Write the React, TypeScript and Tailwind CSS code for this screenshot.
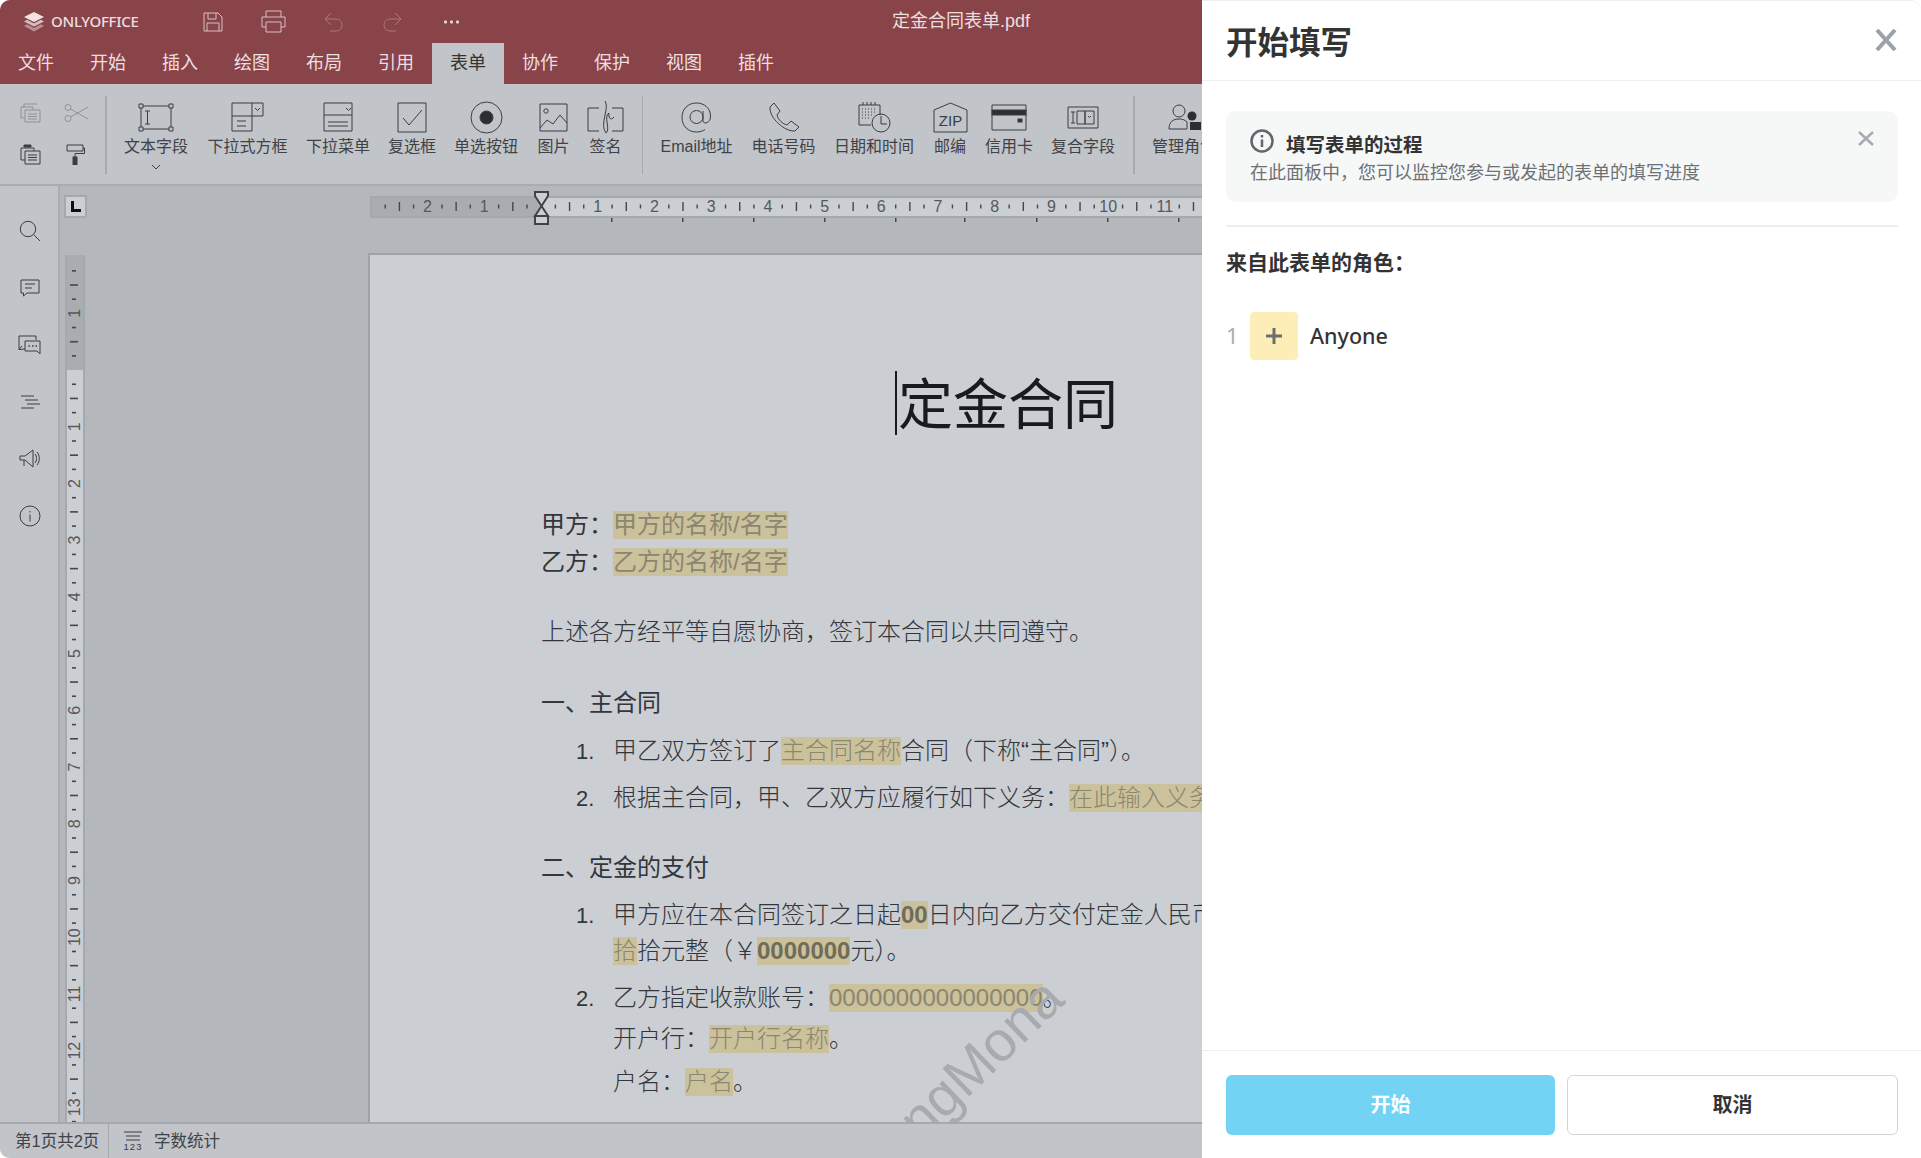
import { ReactNode } from "react";

const ICON = "#3a3d42";
const TICKS_H = Array.from({ length: 76 }, (_, i) => i - 12);
const TICKS_V = Array.from({ length: 64 }, (_, i) => i - 8);

function TopRuler() {
  const origin = 171;
  const step = 14.18;
  return (
    <svg width="832" height="22" className="shrink-0 overflow-visible ml-[283px]">
      <rect x="0" y="0" width="832" height="22" fill="#a5a8ad" />
      <rect x="170" y="2" width="662" height="18" fill="#cbced3" />
      <rect x="2" y="2" width="168" height="18" fill="#a9acb1" />
      {TICKS_H.map((i) => {
        const x = origin + i * step;
        if (x < 4 || i === 0) return null;
        const m = ((i % 4) + 4) % 4;
        if (m === 0) {
          return (
            <text key={i} x={x} y="15.5" fontSize="16" textAnchor="middle" fill="#55585c" fontFamily="Liberation Sans, sans-serif">
              {Math.abs(i / 4)}
            </text>
          );
        }
        const h = m === 2 ? 9 : 4;
        return <rect key={i} x={x - 0.5} y={10.5 - h / 2} width="1.4" height={h} fill="#44474b" />;
      })}
      {[241, 312, 383, 454, 525, 594, 666, 737, 808].map((x) => (
        <rect key={x} x={x} y="22" width="1.5" height="4" fill="#44474b" />
      ))}
      <path d="M165 -4H178V0L171.5 10L165 0ZM171.5 10L178 20H165ZM165 20H178V28H165Z" fill="#cbced3" stroke="#3f4246" strokeWidth="2" />
    </svg>
  );
}

function SideRuler() {
  const origin = 115;
  const step = 14.18;
  return (
    <svg width="20" height="867" className="shrink-0 ml-[5px]">
      <rect width="20" height="867" fill="#a5a8ad" />
      <rect x="2" y="0" width="16" height="867" fill="#cbced3" />
      <rect x="2" y="0" width="16" height="115" fill="#a9acb1" />
      {TICKS_V.map((i) => {
        const y = origin + i * step;
        if (y < 6 || i === 0) return null;
        const m = ((i % 4) + 4) % 4;
        if (m === 0) {
          return (
            <text key={i} x="0" y="0" fontSize="16" textAnchor="middle" fill="#55585c" fontFamily="Liberation Sans, sans-serif" transform={`translate(15 ${y}) rotate(-90)`}>
              {Math.abs(i / 4)}
            </text>
          );
        }
        const w = m === 2 ? 8 : 4;
        return <rect key={i} x={9 - w / 2} y={y - 0.7} width={w} height="1.6" fill="#44474b" />;
      })}
    </svg>
  );
}

function Hl({ children, bold }: { children: ReactNode; bold?: boolean }) {
  return (
    <span className={"inline-block h-[28px] leading-[27px] bg-[#cbc19b] " + (bold ? "font-bold text-[#6f6c5a] " : "text-[#8a8670] ")}>
      {children}
    </span>
  );
}

function Line({ className, children }: { className?: string; children: ReactNode }) {
  return <div className={"flex items-center h-[34px] whitespace-nowrap text-[24px] font-light text-[#33363a] " + (className ?? "")}>{children}</div>;
}

function Num({ n }: { n: string }) {
  return <span className="w-[37px] ml-[35px] shrink-0 font-normal text-[22px] text-[#33363a] font-['Liberation_Sans']">{n}</span>;
}

function Tool({ label, className, children, arrow }: { label: string; className: string; children: ReactNode; arrow?: boolean }) {
  return (
    <div className={"shrink-0 flex flex-col items-center " + className}>
      <div className="h-[52px] w-full flex items-center justify-center pt-[14px]">{children}</div>
      <div className="h-[20px] leading-[20px] mt-[1px] text-[16px] text-[#3f4246] whitespace-nowrap">{label}</div>
      {arrow && (
        <svg width="10" height="6" className="mt-[7px]" fill="none" stroke={ICON}>
          <path d="M1 1L5 5L9 1" />
        </svg>
      )}
    </div>
  );
}

function Sep({ className }: { className: string }) {
  return <div className={"shrink-0 w-[1.5px] h-[78px] mt-[12px] bg-[#a6a9ae] " + className} />;
}

const SIDE_ICONS = [
  <svg key="a" width="22" height="22" fill="none" stroke={ICON}>
    <circle cx="9" cy="9" r="7.7" />
    <path d="M14.5 14.5L21 21" />
  </svg>,
  <svg key="b" width="20" height="18" fill="none" stroke={ICON}>
    <path d="M1 1H19V14H7L3.5 17V14H1Z" />
    <path d="M5 5H15M5 9H12" />
  </svg>,
  <svg key="c" width="23" height="20" fill="none" stroke={ICON}>
    <path d="M7 14L1 14.5V1H18V5" />
    <path d="M1 14.5L4 11" />
    <path d="M7 6H22V19L19 16H7Z" />
    <path d="M10.5 11H12M14 11H15.5M17.5 11H19" strokeWidth="1.5" />
  </svg>,
  <svg key="d" width="20" height="14" fill="none" stroke={ICON}>
    <path d="M1 1H14M5 5H18M7 9H20M1 13H14" />
  </svg>,
  <svg key="e" width="22" height="19" fill="none" stroke={ICON}>
    <path d="M1 7H6L14 1V18L6 11H1Z" />
    <path d="M5 11V17" />
    <path d="M16 5C18 7 18 12 16 14M18 3C21 6 21 13 18 16" />
  </svg>,
  <svg key="f" width="22" height="22" fill="none" stroke={ICON}>
    <circle cx="11" cy="11" r="10" />
    <path d="M11 9.5V16.5M11 6V7.5" />
  </svg>,
];

export default function App() {
  return (
    <div className="w-[1921px] h-[1158px] flex overflow-hidden bg-white text-[#333] font-['Liberation_Sans','Noto_Sans_CJK_SC',sans-serif]">
      <div className="w-[1202px] shrink-0 flex flex-col overflow-hidden rounded-tl-[10px] rounded-bl-[10px] bg-[#c1c4c9]">
        <div className="h-[84px] shrink-0 bg-[#884449] text-[#ecdfe0]">
          <div className="h-[43px] flex items-center">
            <svg width="20" height="20" className="ml-[24px] shrink-0">
              <path d="M10 0L20 5L10 10L0 5Z" fill="#efe3e4" />
              <path d="M3 7.8L10 11.5L17 7.8L20 9.5L10 14.5L0 9.5Z" fill="#d6bec0" />
              <path d="M3 12.3L10 16L17 12.3L20 14L10 19.5L0 14Z" fill="#b98f92" />
            </svg>
            <span className="ml-[7px] w-[90px] whitespace-nowrap text-[15px] font-medium font-['Noto_Sans'] tracking-[-0.25px]">ONLYOFFICE</span>
            <svg width="20" height="20" className="ml-[62px] shrink-0" fill="none" stroke="#d9bfc1">
              <path d="M1 1H15L19 5V19H1Z" />
              <path d="M5 1V7H13V1M4 19V11H16V19" />
            </svg>
            <svg width="25" height="23" className="ml-[38px] shrink-0" fill="none" stroke="#d9bfc1">
              <path d="M5 7V1H20V7M5 17H1V7H24V17H20" />
              <path d="M5 12H20V22H5Z" />
            </svg>
            <svg width="19" height="20" className="ml-[38px] shrink-0" fill="none" stroke="#ac7a7e">
              <path d="M7 1L1 7L7 13M1 7H12C20 7 20 19 12 19H6" />
            </svg>
            <svg width="19" height="20" className="ml-[40px] shrink-0" fill="none" stroke="#ac7a7e">
              <path d="M12 1L18 7L12 13M18 7H7C-1 7 -1 19 7 19H13" />
            </svg>
            <svg width="16" height="4" className="ml-[42px] shrink-0" fill="#e8d6d7">
              <rect y="0.5" width="3" height="3" rx="1" />
              <rect x="6" y="0.5" width="3" height="3" rx="1" />
              <rect x="12" y="0.5" width="3" height="3" rx="1" />
            </svg>
            <span className="ml-auto mr-[172px] text-[18px] whitespace-nowrap">定金合同表单.pdf</span>
          </div>
          <div className="h-[41px] flex text-[18px]">
            {["文件", "开始", "插入", "绘图", "布局", "引用", "表单", "协作", "保护", "视图", "插件"].map((t) => (
              <div key={t} className={"w-[72px] flex items-center justify-center pb-[1px] " + (t === "表单" ? "bg-[#c1c4c9] text-[#333]" : "")}>
                {t}
              </div>
            ))}
          </div>
        </div>

        <div className="h-[102px] shrink-0 flex overflow-hidden border-b-[2px] border-[#a9acb1]">
          <div className="w-[68px] ml-[20px] shrink-0 grid grid-cols-2 content-start pt-[19px] gap-y-[21px]">
            <svg width="21" height="20" fill="none" stroke="#8f9297">
              <path d="M4 4V1H14L17 1M1 4H13V7M5 7H20V19H5ZM1 4V15H5" />
              <path d="M8 11H17M8 13.5H17M8 16H17" />
            </svg>
            <svg width="25" height="20" className="ml-[10px]" fill="none" stroke="#8f9297">
              <circle cx="4" cy="4.5" r="3" />
              <circle cx="4" cy="15.5" r="3" />
              <path d="M6.5 6L24 16M6.5 14L24 4" />
            </svg>
            <svg width="21" height="21" stroke={ICON} fill="none">
              <path d="M1 4H14V7M1 4V16H5" />
              <path d="M5 7H20V20H5Z" />
              <path d="M4 3H11V1H4Z" fill={ICON} />
              <path d="M8 11H17M8 13.5H17M8 16H17" />
            </svg>
            <svg width="19" height="21" className="ml-[12px]" fill="none" stroke={ICON}>
              <path d="M1 1H17V7H1Z" />
              <path d="M17 4H18.5V9.5H9V13" />
              <rect x="7" y="13" width="4" height="8" fill={ICON} />
            </svg>
          </div>
          <Sep className="ml-[17px]" />
          <Tool label="文本字段" className="w-[65px] ml-[17px]" arrow>
            <svg width="36" height="29" className="shrink-0" fill="none" stroke={ICON}>
              <path d="M3 3H33V26H3Z" />
              <path d="M1 1H5V5H1ZM31 1H35V5H31ZM1 24H5V28H1ZM31 24H35V28H31Z" fill="#c1c4c9" />
              <path d="M7 8H12M7 21H12M9.5 8V21" />
            </svg>
          </Tool>
          <Tool label="下拉式方框" className="w-[82px] ml-[18px]">
            <svg width="33" height="30" className="shrink-0" fill="none" stroke={ICON}>
              <path d="M1 1H21V29H1ZM21 1H32V14H21M1 14H21" />
              <path d="M24 6L26.5 8.5L29 6M6 19H15M6 24H15" />
            </svg>
          </Tool>
          <Tool label="下拉菜单" className="w-[65px] ml-[17px]">
            <svg width="30" height="30" className="shrink-0" fill="none" stroke={ICON}>
              <path d="M1 1H29V29H1Z" />
              <path d="M23 6L25.5 8.5L28 6M1 13H29M5 20H25M5 24H25" strokeWidth="1" />
            </svg>
          </Tool>
          <Tool label="复选框" className="w-[49px] ml-[17px]">
            <svg width="30" height="31" className="shrink-0" fill="none" stroke={ICON}>
              <path d="M1 1H29V30H1Z" />
              <path d="M6 16L12 23L25 8" />
            </svg>
          </Tool>
          <Tool label="单选按钮" className="w-[65px] ml-[17px]">
            <svg width="33" height="33" className="shrink-0" fill="none" stroke={ICON}>
              <circle cx="16.5" cy="16.5" r="15.5" />
              <circle cx="16.5" cy="16.5" r="6.5" fill="#2c2e32" />
            </svg>
          </Tool>
          <Tool label="图片" className="w-[32px] ml-[19px]">
            <svg width="29" height="29" className="shrink-0" fill="none" stroke={ICON}>
              <path d="M1 1H28V28H1Z" />
              <circle cx="7" cy="8" r="2.2" />
              <path d="M1 25L8 17L14 21L21 12L28 20" />
            </svg>
          </Tool>
          <Tool label="签名" className="w-[32px] ml-[20px]">
            <svg width="38" height="34" className="shrink-0" fill="none" stroke={ICON}>
              <path d="M12 8H1V31H12M25 8H36V31H25" />
              <path d="M18 1C23 8 12 24 19 33C24 30 16 16 22 13C21 18 24 21 27 17" />
            </svg>
          </Tool>
          <Sep className="ml-[20px]" />
          <Tool label="Email地址" className="w-[75px] ml-[16px]">
            <svg width="31" height="31" className="shrink-0" fill="none" stroke={ICON}>
              <circle cx="15.5" cy="15" r="6.5" />
              <path d="M22 9V19C22 22 29 22 29.5 15C30 6 23 1 15.5 1C7 1 1 7 1 15.5C1 24 7 30 15.5 30C19 30 22 29 24 27.5" />
            </svg>
          </Tool>
          <Tool label="电话号码" className="w-[65px] ml-[17px]">
            <svg width="32" height="30" className="shrink-0" fill="none" stroke={ICON}>
              <path d="M2 5L6 1L12 9L9 13C10 18 15 22 19 23L23 19L31 25L27 29C17 30 1 16 2 5Z" />
            </svg>
          </Tool>
          <Tool label="日期和时间" className="w-[82px] ml-[17px]">
            <svg width="33" height="32" className="shrink-0" fill="none" stroke={ICON}>
              <path d="M1 4H22V14M1 4V24H13" />
              <path d="M5 1V4M9 1V4M13 1V4M17 1V4" />
              <path d="M4 8H19M4 11H18M4 14H15M4 17H13" strokeDasharray="1 2" />
              <circle cx="23" cy="22" r="9" />
              <path d="M23 15V23H29" />
            </svg>
          </Tool>
          <Tool label="邮编" className="w-[32px] ml-[19px]">
            <svg width="35" height="31" className="shrink-0" fill="none" stroke={ICON}>
              <path d="M1 8L17.5 1L34 8V30H1Z" />
              <text x="17.5" y="24" textAnchor="middle" fontSize="15" fill={ICON} stroke="none" fontFamily="Liberation Sans, sans-serif">ZIP</text>
            </svg>
          </Tool>
          <Tool label="信用卡" className="w-[50px] ml-[18px]">
            <svg width="36" height="27" className="shrink-0" fill="none" stroke={ICON}>
              <path d="M1 1H35V26H1Z" />
              <rect x="1" y="6" width="34" height="5" fill="#2c2e32" />
              <rect x="27" y="15" width="4" height="3" fill="#2c2e32" />
            </svg>
          </Tool>
          <Tool label="复合字段" className="w-[66px] ml-[16px]">
            <svg width="32" height="23" className="shrink-0" fill="none" stroke={ICON}>
              <path d="M1 1H31V22H1Z" />
              <path d="M4 6H8M4 17H8M6 6V17M10 5H18V18H10ZM18 5H27V18H18Z" />
              <path d="M21 10L22.5 11.5L24 10" />
            </svg>
          </Tool>
          <Sep className="ml-[17px]" />
          <Tool label="管理角色" className="w-[65px] ml-[17px]">
            <svg width="33" height="26" className="shrink-0" fill="none" stroke={ICON}>
              <circle cx="11" cy="7" r="6" />
              <path d="M1 25C1 18 5 15 11 15C15 15 17 16 19 18V25Z" />
              <circle cx="24" cy="12" r="4.5" fill="#2c2e32" stroke="none" />
              <rect x="22" y="18" width="11" height="8" fill="#2c2e32" stroke="none" />
            </svg>
          </Tool>
        </div>

        <div className="flex-1 min-h-0 flex">
          <div className="w-[60px] shrink-0 border-r-[2px] border-[#a9acb1] pt-[16px] flex flex-col items-center">
            {SIDE_ICONS.map((ic, i) => (
              <div key={i} className="h-[57px] flex items-center justify-center pl-[1px]">
                {ic}
              </div>
            ))}
          </div>
          <div className="flex-1 min-w-0 bg-[#b4b7bc] flex flex-col overflow-hidden">
            <div className="h-[67px] shrink-0 pt-[9px] flex items-start">
              <div className="w-[23px] h-[23px] ml-[4px] shrink-0 border-[2px] border-[#a5a8ad] bg-[#cbced3] flex items-center justify-center">
                <svg width="10" height="11" fill="#0d0e10">
                  <path d="M0 0H3V8H10V11H0Z" />
                </svg>
              </div>
              <div className="mt-[1px]">
                <TopRuler />
              </div>
            </div>
            <div className="flex-1 min-h-0 flex">
              <div className="pt-[2px]">
                <SideRuler />
              </div>
              <div className="relative flex-1 min-w-0 ml-[283px] border-l-[2px] border-t-[2px] border-[#9fa2a7] bg-[#cbced3] overflow-hidden">
                <div className="relative ml-[525px] mt-[118px] h-[64px] leading-[64px] text-[55px] font-normal text-[#181a1d] whitespace-nowrap pl-[3px]">
                  定金合同
                  <div className="absolute left-0 top-[-2px] w-[2px] h-[64px] bg-[#181a1d]" />
                </div>
                <div className="pl-[171px]">
                  <Line className="mt-[71px] font-normal text-[#26282b]">
                    甲方：<Hl>甲方的名称/名字</Hl>
                  </Line>
                  <Line className="mt-[3px] font-normal text-[#26282b]">
                    乙方：<Hl>乙方的名称/名字</Hl>
                  </Line>
                  <Line className="mt-[36px]">上述各方经平等自愿协商，签订本合同以共同遵守。</Line>
                  <Line className="mt-[37px] font-normal text-[#26282b]">一、主合同</Line>
                  <Line className="mt-[14px]">
                    <Num n="1." />
                    甲乙双方签订了<Hl>主合同名称</Hl>合同（下称“主合同”）。
                  </Line>
                  <Line className="mt-[13px]">
                    <Num n="2." />
                    根据主合同，甲、乙双方应履行如下义务：<Hl>在此输入义务</Hl>
                  </Line>
                  <Line className="mt-[36px] font-normal text-[#26282b]">二、定金的支付</Line>
                  <Line className="mt-[13px]">
                    <Num n="1." />
                    甲方应在本合同签订之日起<Hl bold>00</Hl>日内向乙方交付定金人民币
                  </Line>
                  <Line className="mt-[2px] pl-[72px]">
                    <Hl>拾</Hl>拾元整（￥<Hl bold>0000000</Hl>元）。
                  </Line>
                  <Line className="mt-[13px]">
                    <Num n="2." />
                    乙方指定收款账号：<Hl>0000000000000000</Hl>。
                  </Line>
                  <Line className="mt-[7px] pl-[72px]">
                    开户行：<Hl>开户行名称</Hl>。
                  </Line>
                  <Line className="mt-[9px] pl-[72px]">
                    户名：<Hl>户名</Hl>。
                  </Line>
                </div>
                <div className="absolute left-[538px] top-[846px] origin-left -rotate-[44deg] text-[56px] leading-[56px] font-['Liberation_Sans'] text-[#a8aaae] whitespace-nowrap">
                  ngMona
                </div>
              </div>
            </div>
          </div>
        </div>

        <div className="h-[36px] shrink-0 flex items-center border-t-[2px] border-[#a5a8ad] text-[16.5px] text-[#3f4246] bg-[#c1c4c9]">
          <div className="w-[109px] h-full shrink-0 flex items-center pl-[15px] border-r-[1.5px] border-[#a5a8ad]">第1页共2页</div>
          <svg width="20" height="20" className="ml-[14px] shrink-0" fill="none" stroke={ICON}>
            <path d="M1 1H19M3 5H17M3 9H17" />
            <text x="10" y="19" textAnchor="middle" fontSize="9.5" fill={ICON} stroke="none" letterSpacing="1" fontFamily="Liberation Sans, sans-serif">123</text>
          </svg>
          <span className="ml-[11px]">字数统计</span>
        </div>
      </div>

      <div className="flex-1 min-w-0 flex flex-col bg-white rounded-r-[10px] border-t border-[#eceef0] font-['Noto_Sans','Noto_Sans_CJK_SC',sans-serif]">
        <div className="h-[80px] shrink-0 flex items-center justify-between pl-[24px] pr-[24px] border-b-[1.5px] border-[#eceef0]">
          <div className="text-[31.5px] font-bold text-[#333] leading-none pt-[3px]">开始填写</div>
          <svg width="22" height="22" fill="none" stroke="#9ca0a8" strokeWidth="4" className="mb-[1px]">
            <path d="M2 1L20 21M20 1L2 21" />
          </svg>
        </div>
        <div className="flex-1 min-h-0 pl-[24px] pr-[23px] pt-[30px]">
          <div className="h-[91px] rounded-[10px] bg-[#f6f8f8] flex flex-col pl-[24px] pr-[24px] pt-[18px] relative">
            <div className="flex items-center h-[24px]">
              <svg width="24" height="24" fill="none" stroke="#62666b" strokeWidth="2.5" className="shrink-0">
                <circle cx="12" cy="12" r="10.5" />
                <path d="M12 10.5V18M12 6V8.5" />
              </svg>
              <span className="ml-[12px] text-[19.5px] font-bold text-[#333] mt-[8px]">填写表单的过程</span>
            </div>
            <div className="text-[18px] leading-[24px] mt-[7px] text-[#6d7176] whitespace-nowrap">在此面板中，您可以监控您参与或发起的表单的填写进度</div>
            <svg width="16" height="15" fill="none" stroke="#a6abb3" strokeWidth="2.5" className="absolute right-[24px] top-[20px]">
              <path d="M1 1L15 14M15 1L1 14" />
            </svg>
          </div>
          <div className="h-[1.5px] mt-[23px] bg-[#eceef0]" />
          <div className="mt-[19px] text-[21px] font-bold text-[#333] leading-[32px]">来自此表单的角色：</div>
          <div className="mt-[34px] flex items-center">
            <span className="w-[24px] text-[22px] text-[#a9adb2]">1</span>
            <div className="w-[48px] h-[48px] rounded-[4px] bg-[#fdeeb8] flex items-center justify-center">
              <svg width="16" height="16" stroke="#6c6e6e" strokeWidth="3">
                <path d="M8 0V16M0 8H16" />
              </svg>
            </div>
            <span className="ml-[12px] text-[21.5px] font-medium text-[#333] pt-[1px]">Anyone</span>
          </div>
        </div>
        <div className="h-[108px] shrink-0 border-t-[1.5px] border-[#eceef0] pl-[24px] pr-[23px] pt-[24px] flex gap-[12px]">
          <div className="flex-1 h-[60px] rounded-[6px] bg-[#72d3f5] text-white font-bold text-[20px] flex items-center justify-center">开始</div>
          <div className="flex-1 h-[60px] rounded-[6px] border-[1.5px] border-[#d2d5d9] text-[#333] font-bold text-[20px] flex items-center justify-center">取消</div>
        </div>
      </div>
    </div>
  );
}
